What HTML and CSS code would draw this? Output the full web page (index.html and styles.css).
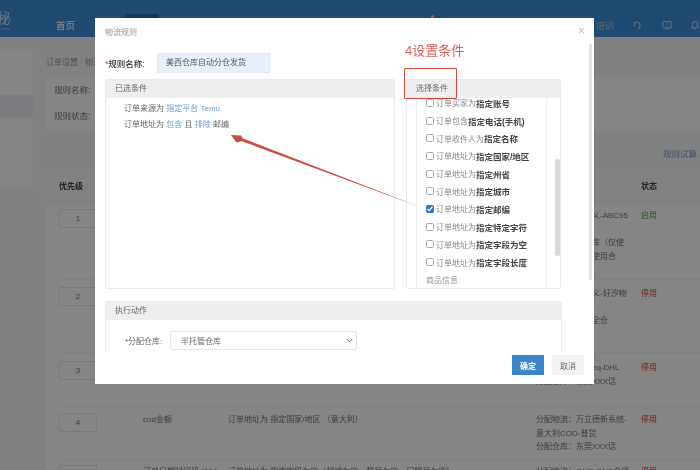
FILE: index.html
```html
<!DOCTYPE html>
<html lang="zh">
<head>
<meta charset="utf-8">
<title>物流规则</title>
<link rel="stylesheet" href="styles.css">
</head>
<body>
<div class="page">
  <header class="topbar">
    <div class="logo"><span class="logo-main">秘</span><span class="logo-sub">master</span></div>
    <nav class="nav"><span class="nav-item">首页</span><span class="nav-item nav-active">订单</span></nav>
    <div class="top-right">
      <span class="train">培训</span>
      <svg class="top-icon" viewBox="0 0 12 12"><path d="M2.500 7.500V6a3.500 3.500 0 0 1 7 0v2M9.500 8.500 7.500 10.500" fill="none" stroke="currentColor" stroke-width="1.700"/></svg>
      <svg class="top-icon" viewBox="0 0 12 12"><rect x="1" y="2" width="10" height="7.500" rx="1" fill="none" stroke="currentColor" stroke-width="1.500"/><path d="M6 3.500v3M4 10.800h4" stroke="currentColor" stroke-width="1.300"/></svg>
      <svg class="top-icon" viewBox="0 0 12 12"><path d="M2 9h8L9 7.500V5a3 3 0 0 0-6 0v2.500zM5 10.800h2" fill="none" stroke="currentColor" stroke-width="1.500"/></svg>
    </div>
  </header>
  <div class="content">
    <aside class="side">
      <div class="side-row"></div><div class="side-row"></div><div class="side-row side-sel"></div><div class="side-row"></div><div class="side-row"></div><div class="side-row"></div>
    </aside>
    <main class="main">
      <div class="crumb">订单设置 · 物流规则</div>
      <section class="filter">
        <div>规则名称:</div>
        <div>规则状态:</div>
      </section>
      <div class="tools"><a class="link">规则试算 (</a></div>
      <section class="table">
        <div class="row row-head"><span>优先级</span><span></span><span></span><span></span><span>状态</span></div>
        <div class="row r1"><span class="num">1</span><span></span><span></span><span class="act">分配物流：自定义-ABC95<br><br>分配仓库：海外库（仅使<br>不允许跨仓发货使用合</span><span class="on">启用</span></div>
        <div class="row r2"><span class="num">2</span><span></span><span></span><span class="act">分配物流：自定义-好汐物<br><br>分配仓库：东莞全仓</span><span class="off">停用</span></div>
        <div class="row r3"><span class="num">3</span><span></span><span></span><span class="act">分配物流：自定eq-DHL<br>分配仓库：东莞XXX话</span><span class="off">停用</span></div>
        <div class="row r4"><span class="num">4</span><span class="cell">cod金额</span><span class="cell">订单地址为 指定国家/地区 （意大利）</span><span class="act">分配物流：万立德新系统-<br>意大利COD-普货<br>分配仓库：东莞XXX话</span><span class="off">停用</span></div>
        <div class="row r5"><span class="num">5</span><span class="cell">订单日期时间段-f004</span><span class="cell">订单地址为 指定字段为空（邮编为空，税号为空，门牌号为空）</span><span class="act">分配物流：ONE-ONE仓话</span><span class="off">停用</span></div>
      </section>
    </main>
  </div>
  <div class="mask"></div>
  <div class="modal">
    <div class="modal-title"><span>物流规则</span><span class="close">×</span></div>
    <div class="modal-body">
      <div class="name-row"><label class="name-label"><i>*</i>规则名称:</label><div class="name-input">美西仓库自动分仓发货</div></div>
      <div class="panels">
        <section class="panel panel-left">
          <div class="panel-head">已选条件</div>
          <div class="selected">
            <p>订单来源为 <a>指定平台 Temu</a></p>
            <p>订单地址为 <a>包含</a> 且 <a>排除</a> 邮编</p>
          </div>
        </section>
        <section class="panel panel-right">
          <div class="panel-head">选择条件</div>
          <div class="list-wrap">
            <ul class="list">
              <li><input type="checkbox">订单买家为<b>指定账号</b></li>
              <li><input type="checkbox">订单包含<b>指定电话(手机)</b></li>
              <li><input type="checkbox">订单收件人为<b>指定名称</b></li>
              <li><input type="checkbox">订单地址为<b>指定国家/地区</b></li>
              <li><input type="checkbox">订单地址为<b>指定州省</b></li>
              <li><input type="checkbox">订单地址为<b>指定城市</b></li>
              <li><input type="checkbox" checked>订单地址为<b>指定邮编</b></li>
              <li><input type="checkbox">订单地址为<b>指定特定字符</b></li>
              <li><input type="checkbox">订单地址为<b>指定字段为空</b></li>
              <li><input type="checkbox">订单地址为<b>指定字段长度</b></li>
              <li class="group">商品信息</li>
            </ul>
            <div class="list-thumb"></div>
          </div>
        </section>
      </div>
      <section class="panel panel-action">
        <div class="panel-head">执行动作</div>
        <div class="action-row"><label class="action-label">*分配仓库:</label>
          <div class="select"><span>半托管仓库</span><svg class="chev" viewBox="0 0 8 5"><path d="M1 1l3 3 3-3" fill="none" stroke="currentColor" stroke-width="1.100"/></svg></div>
        </div>
      </section>
    </div>
    <div class="modal-foot"><button class="btn btn-ok">确定</button><button class="btn btn-no">取消</button></div>
    <div class="modal-thumb"></div>
  </div>
  <div class="note-title">4设置条件</div>
  <div class="note-box"></div>
  <div class="note-dot"></div>
  <svg class="note-arrow" viewBox="0 0 700 470">
    <polygon points="422,207.800 242,141.200 236.500,142.500 231,135 241,135.500 243,138.400" fill="#cf4a42"/>
  </svg>
</div>
</body>
</html>
```
FILE: styles.css
```css
* { box-sizing: border-box; }
html, body { margin: 0; padding: 0; overflow: hidden; }
body { font-family: "Liberation Sans", "Noto Sans CJK SC", sans-serif; font-size: 8px; color: #333; }
.page { position: relative; width: 700px; height: 470px; overflow: hidden; background: #f8f8f8; filter: blur(.45px); }

.topbar { height: 37px; background: #3c8edb; display: flex; align-items: stretch; color: #fff; }
.logo { width: 56px; position: relative; color: #d5e3f2; }
.logo-main { position: absolute; left: -3px; top: 9px; font-size: 14px; line-height: 18px; }
.logo-sub { position: absolute; left: -2px; top: 26px; font-size: 4px; opacity: .6; }
.nav { display: flex; font-size: 9.500px; font-weight: bold; align-items: flex-end; }
.nav-item { width: 69px; height: 23px; padding-top: 4px; color: #e3ecf6; }
.nav-active { background: #1f6ebd; width: 33px; height: 23px; color: transparent; }
.top-right { margin-left: auto; display: flex; align-items: center; padding-top: 13px; margin-right: 0; color: #b8cbe0; }
.train { width: 31px; font-size: 9px; margin-right: 5px; }
.top-icon { width: 10px; height: 10px; margin-right: 20px; }
.top-icon:nth-of-type(2) { margin-right: 18px; }
.top-icon:last-child { margin-right: 0; }

.content { display: flex; padding-top: 13px; }
.side { width: 33px; height: 137px; background: #fff; flex: none; margin-right: 13px; }
.side-row { height: 22.500px; border-bottom: 1px solid #f8f8f8; }
.side-sel { background: #eaeef4; }
.main { flex: 1; min-width: 0; font-size: 8px; color: #777; }
.crumb { height: 26px; padding-top: 6px; color: #999; }
.filter { height: 54px; background: #fff; padding: 7px 0 0 8px; display: flex; flex-direction: column; gap: 14px; margin-right: -2px; font-size: 8.500px; }
.tools { height: 41px; padding: 17px 0 0 617px; white-space: nowrap; font-size: 8.500px; }
.link { color: #7c9fce; }

.table { background: #fff; padding: 0 0 0 13px; }
.row { display: grid; grid-template-columns: 84px 85px 308px 105px 60px; border-bottom: 1px solid #f4f4f4; line-height: 13.700px; }
.row-head { height: 33px; align-items: center; background: #fafafa; font-weight: bold; color: #444; margin-left: -13px; padding-left: 13px; }
.r1 { height: 76px; padding-top: 5px; }
.r2 { height: 73px; padding-top: 7px; }
.r3 { height: 54px; padding-top: 8px; }
.r4 { height: 53px; padding-top: 6px; }
.r5 { height: 50px; padding-top: 5px; }
.num { width: 38px; height: 19px; border: 1px solid #e8e8e8; border-radius: 2px; background: #fff; text-align: center; line-height: 17px; }
.act { color: #777; white-space: nowrap; }
.cell { white-space: nowrap; overflow: hidden; color: #777; }
.on { color: #4aa84a; }
.off { color: #e03c3c; }

.mask { position: absolute; inset: 0; background: rgba(0, 0, 0, .48); }

.modal { position: absolute; left: 95px; top: 18px; width: 499px; height: 366px; background: #fff; display: flex; flex-direction: column; }
.modal-title { height: 25px; padding: 9px 10px 0 10px; display: flex; justify-content: space-between; color: #999; font-size: 8px; line-height: 11px; }
.close { font-size: 12px; color: #bbb; line-height: 9px; margin-right: -1px; }
.modal-body { height: 308px; padding: 10px 32px 0 10px; overflow: hidden; }
.name-row { display: flex; align-items: center; height: 20px; }
.name-label { width: 52px; font-size: 8.500px; color: #333; font-weight: 500; white-space: nowrap; }
.name-label i { color: #d33; font-style: normal; }
.name-input { width: 113px; height: 20px; background: #e8f0fe; border: 1px solid #e1e8f2; padding-left: 8px; line-height: 18px; color: #555; }
.panels { display: flex; gap: 11px; margin-top: 6px; height: 210px; }
.panel { border: 1px solid #eaeaea; border-radius: 2px; background: #fff; }
.panel-left { width: 290px; }
.panel-right { width: 155px; overflow: hidden; }
.panel-head { height: 18px; background: #efefef; padding-left: 9px; line-height: 18px; color: #666; font-size: 8px; }
.selected { padding: 5px 0 0 18px; color: #666; }
.selected p { margin: 0 0 5px; height: 11px; line-height: 11px; }
.selected a { color: #6d9ad0; }
.list-wrap { position: relative; height: 191px; overflow: hidden; }
.list { list-style: none; margin: -4px 0 0 9px; padding: 0 0 0 9px; width: 131px; height: 201px; border: 1px solid #eee; border-width: 0 1px; }
.list li { height: 17.700px; display: flex; align-items: center; color: #888; white-space: nowrap; font-size: 8px; }
.list b { color: #444; font-size: 8.500px; }
.list input { width: 8px; height: 8px; margin: 0 2px 0 0; accent-color: #2f74d0; flex: none; }
.list input:not(:checked) { appearance: none; border: 1px solid #aaa; border-radius: 1.500px; background: #fff; }
.list .group { color: #999; }
.list-thumb { position: absolute; right: 0; top: 61px; width: 5px; height: 97px; background: #d9d9d9; border-radius: 2px; }
.panel-action { width: 457px; height: 60px; margin-top: 12px; }
.action-row { display: flex; align-items: center; height: 19px; margin-top: 11px; padding-left: 19px; }
.action-label { width: 45px; color: #666; white-space: nowrap; }
.select { width: 187px; height: 19px; border: 1px solid #e5e5e5; border-radius: 2px; display: flex; align-items: center; justify-content: space-between; padding: 0 3px 0 10px; color: #666; }
.chev { width: 7px; height: 5px; color: #555; }
.modal-foot { flex: 1; display: flex; justify-content: flex-end; align-items: flex-start; gap: 8px; padding: 4px 10px 0 0; }
.btn { width: 32px; height: 20px; border: 0; padding: 0; font: inherit; font-size: 8px; }
.btn-ok { background: #3d87c9; color: #fff; font-weight: bold; }
.btn-no { background: #f3f3f3; color: #666; }
.modal-thumb { position: absolute; right: 2px; top: 26px; width: 3px; height: 236px; background: #e2e2e2; }

.note-title { position: absolute; left: 405px; top: 43px; font-size: 13px; line-height: 16px; color: #dc5f56; }
.note-box { position: absolute; left: 404px; top: 68px; width: 53px; height: 31px; border: 1.500px solid #d9483f; border-radius: 1px; }
.note-dot { position: absolute; left: 431px; top: 15px; width: 3px; height: 3px; background: #d9483f; border-radius: 50% 50% 0 0; }
.note-arrow { position: absolute; inset: 0; width: 700px; height: 470px; pointer-events: none; }
```
